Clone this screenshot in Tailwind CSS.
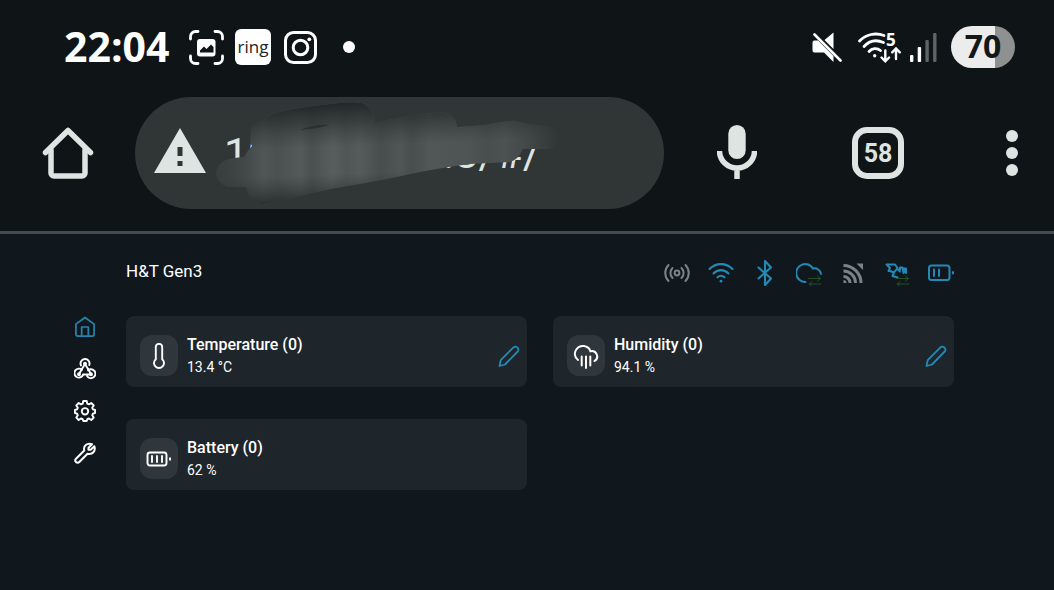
<!DOCTYPE html>
<html lang="en">
  <head>
    <meta charset="UTF-8" />
    <meta name="viewport" content="width=device-width, initial-scale=1.0" />
    <title>H&amp;T Gen3</title>
    <script src="https://cdn.jsdelivr.net/npm/@tailwindcss/browser@4"></script>
  </head>
  <body class="min-h-screen bg-[#10181e] font-['Roboto',sans-serif] text-white">
    <header class="bg-[#0f1516] border-b-3 border-[#454b4b]">
      <!-- Phone status bar -->
      <div class="flex items-center h-[94px] pl-16 pr-[39px]">
        <span class="w-[125px] pb-0.5 font-['Open_Sans',sans-serif] font-bold text-[41px] leading-none">22:04</span>
        <svg class="w-[35px] h-[35px]" viewBox="0 0 35 35" fill="none">
          <path d="M1.500 9V6.500a5 5 0 0 1 5-5H9M26 1.500h2.500a5 5 0 0 1 5 5V9M33.500 26v2.500a5 5 0 0 1-5 5H26M9 33.500H6.500a5 5 0 0 1-5-5V26" stroke="#fff" stroke-width="2.800" stroke-linecap="round" />
          <rect x="8" y="9" width="18.500" height="17.500" rx="3" fill="#fff" />
          <path d="M11 22.500v-2l4-4 2.500 2.500 4.500-4.500 2.500 2.500v5.500z" fill="#0f1516" />
        </svg>
        <span class="ml-[11px] flex items-center justify-center w-9 h-9 rounded-md bg-white text-[#222] font-['Open_Sans',sans-serif] font-medium text-[17px] leading-none pb-0.5">ring</span>
        <svg class="ml-[13px] w-[33px] h-[33px]" viewBox="0 0 33 33" fill="none" stroke="#fff" stroke-width="3">
          <rect x="1.500" y="1.500" width="30" height="30" rx="8" />
          <circle cx="16.500" cy="16.500" r="7.300" />
          <circle cx="25.300" cy="8.300" r="1.900" fill="#fff" stroke="none" />
        </svg>
        <span class="ml-[26px] w-3 h-3 rounded-full bg-white"></span>

        <svg class="ml-auto w-[30px] h-[30px]" viewBox="0 0 30 30" fill="#fff">
          <path d="M2 8.500H6L21.500 24V30L12 20.500H2.500A2 2 0 0 1 .500 18.500v-8a2 2 0 0 1 1.500-2zM12.500 8l9-7.500v16.500z" />
          <path d="M2.500 2.500L28.500 28.500" stroke="#fff" stroke-width="2.600" stroke-linecap="round" />
        </svg>
        <svg class="ml-4 w-[43px] h-[31px] overflow-visible" viewBox="0 0 43 31" fill="none" stroke="#fff" stroke-width="2.800" stroke-linecap="round">
          <path d="M1.500 9C8 2 18 .500 26 3.500M6 14.500C11.500 8.500 18.500 7.500 25.500 10.500M11 19.500C14 16 19 15.500 22.500 18.500" />
          <circle cx="16.700" cy="23.700" r="1.700" fill="#fff" stroke="none" />
          <path d="M27.300 18.500v10.500M23.500 25.500l3.800 3.800 3.800-3.800M38 27V17M34.200 20.300L38 16.500l3.800 3.800" stroke-width="2.400" />
          <text x="28" y="14" font-size="17" font-weight="700" font-family="Open Sans, sans-serif" fill="#fff" stroke="none">5</text>
        </svg>
        <svg class="ml-[9px] w-[27px] h-[29px]" viewBox="0 0 27 29" fill="#fff">
          <rect x="0" y="22" width="3.400" height="7" rx="1" />
          <rect x="7.700" y="14" width="3.400" height="15" rx="1" />
          <rect x="15.400" y="7" width="3.400" height="22" rx="1" fill="#5f6464" />
          <rect x="23.100" y="0" width="3.400" height="29" rx="1" fill="#5f6464" />
        </svg>
        <div class="ml-[14px] flex items-center justify-center w-16 h-[42px] pb-0.5 rounded-full bg-linear-to-r from-[#ececec] from-69% to-[#8f9191] to-69% text-[#131818] font-['Open_Sans',sans-serif] font-bold text-[32px] leading-none">70</div>
      </div>

      <!-- Browser toolbar -->
      <div class="flex items-center pt-[3px] pb-[22px] pl-[42px] pr-9 text-[#dee4e2]">
        <button aria-label="Home">
          <svg class="w-[52px] h-[52px]" viewBox="0 0 52 52" fill="none" stroke="currentColor" stroke-width="5.500" stroke-linecap="round" stroke-linejoin="round">
            <path d="M3.500 25.500L26 3.500l22.500 22" />
            <path d="M9 23v23a3 3 0 0 0 3 3h28a3 3 0 0 0 3-3V23" />
          </svg>
        </button>
        <div class="relative ml-[41px] flex flex-1 min-w-0 items-center h-28 pl-[19px] pr-10 rounded-full bg-[#303535]">
          <svg class="w-[52px] h-[45px] shrink-0 -mt-1.5" viewBox="0 0 52 45" fill="currentColor">
            <path fill-rule="evenodd" d="M26 0l26 45H0zM23.500 19v9h5v-9zM23.500 33v5h5v-5z" />
          </svg>
          <input type="text" aria-label="Address" value="19                .8/#/" class="ml-[18px] min-w-0 flex-1 bg-transparent text-[43px] leading-none outline-none" />
          <!-- Smudge over the private part of the address -->
          <svg class="absolute left-20 top-1 w-[350px] h-[106px] pointer-events-none" viewBox="215 101 350 106">
            <defs>
              <linearGradient id="streaks" gradientUnits="userSpaceOnUse" x1="215" y1="0" x2="560" y2="0">
                <stop offset="0" stop-color="#373c3c" />
                <stop offset=".08" stop-color="#414646" />
                <stop offset=".14" stop-color="#505555" />
                <stop offset=".18" stop-color="#4b5151" />
                <stop offset=".25" stop-color="#545a5a" />
                <stop offset=".28" stop-color="#4a4f4f" />
                <stop offset=".34" stop-color="#585e5e" />
                <stop offset=".38" stop-color="#505656" />
                <stop offset=".42" stop-color="#555b5b" />
                <stop offset=".48" stop-color="#484d4d" />
                <stop offset=".54" stop-color="#505555" />
                <stop offset=".57" stop-color="#484d4d" />
                <stop offset=".62" stop-color="#515757" />
                <stop offset=".74" stop-color="#4e5454" />
                <stop offset=".79" stop-color="#484e4e" />
                <stop offset=".84" stop-color="#4c5151" />
                <stop offset=".9" stop-color="#434848" />
                <stop offset="1" stop-color="#303535" />
              </linearGradient>
              <linearGradient id="shade" gradientUnits="userSpaceOnUse" x1="380" y1="102" x2="384" y2="205">
                <stop offset="0" stop-color="#1d2222" stop-opacity=".9" />
                <stop offset=".18" stop-color="#262b2b" stop-opacity=".6" />
                <stop offset=".42" stop-color="#303535" stop-opacity="0" />
                <stop offset=".68" stop-color="#303535" stop-opacity="0" />
                <stop offset=".95" stop-color="#232828" stop-opacity=".85" />
              </linearGradient>
              <path id="smudge" d="M251 128Q254 123 262 122Q268 115 279 112Q300 107 330 104Q352 101 362 103Q374 108 375 123Q398 117 440 112Q456 114 457 127L485 125Q510 120 516 121Q530 125 548 126Q560 130 559 140Q556 148 550 149L523 149Q518 160 510 162L470 164Q440 168 420 172Q385 180 330 189Q290 198 262 205Q250 202 246 187Q234 187 228 187Q215 182 216 172Q218 163 226 160Q232 158 244 157L247 152L252 146L250 142Q251 136 251 128z" />
            </defs>
            <use href="#smudge" fill="url(#streaks)" />
            <use href="#smudge" fill="url(#shade)" />
            <path d="M300 130q14-6 29-5q-12 4-29 5z" fill="#2b3030" />
          </svg>
        </div>
        <button class="ml-[53px]" aria-label="Voice search">
          <svg class="w-10 h-[55px] -mt-0.5" viewBox="0 0 40 55" fill="none">
            <rect x="11.300" y="0" width="17.400" height="34" rx="8.700" fill="currentColor" />
            <path d="M2.500 26a17.500 17 0 0 0 35 0M20 42v12" stroke="currentColor" stroke-width="5.500" />
          </svg>
        </button>
        <button class="ml-[95px] flex items-center justify-center w-[52px] h-[52px] border-6 border-[#dee4e2] rounded-[15px] font-bold text-[25px] leading-none" aria-label="58 open tabs">58</button>
        <button class="ml-[102px] flex flex-col gap-[5px]" aria-label="Menu">
          <span class="w-3 h-3 rounded-full bg-[#dee4e2]"></span>
          <span class="w-3 h-3 rounded-full bg-[#dee4e2]"></span>
          <span class="w-3 h-3 rounded-full bg-[#dee4e2]"></span>
        </button>
      </div>
    </header>

    <main class="pl-[74px] pr-[100px] pt-6">
      <div class="flex items-center justify-between h-7 pl-[52px]">
        <h1 class="text-[17px]">H&amp;T Gen3</h1>
        <!-- Connection icons -->
        <div class="flex items-center gap-[18px] pt-0.5 text-[#2389b5]">
          <svg class="w-[26px] h-[26px] text-[#7b8288]" viewBox="0 0 26 26" fill="none" stroke="currentColor" stroke-width="2" stroke-linecap="round">
            <circle cx="13" cy="13" r="2.400" />
            <path d="M8.500 8a7 7 0 0 0 0 10M17.500 8a7 7 0 0 1 0 10M4.500 5a11.500 11.500 0 0 0 0 16M21.500 5a11.500 11.500 0 0 1 0 16" />
          </svg>
          <svg class="w-[26px] h-[26px]" viewBox="0 0 26 26" fill="none" stroke="currentColor" stroke-width="2.100" stroke-linecap="round">
            <path d="M1.500 9C8 2.500 18 2.500 24.500 9M5.500 13.500C10 9 16 9 20.500 13.500M9.500 17.300C11.500 15.300 14.500 15.300 16.500 17.300" />
            <circle cx="13" cy="21.200" r="1.400" fill="currentColor" stroke="none" />
          </svg>
          <svg class="w-[26px] h-[26px]" viewBox="0 0 26 26" fill="none" stroke="currentColor" stroke-width="2.100" stroke-linejoin="round" stroke-linecap="round">
            <path d="M6.500 7.500L19 18.500 13 25V1l6 6.500L6.500 18.500" />
          </svg>
          <svg class="w-[26px] h-[26px]" viewBox="0 0 26 26" fill="none" stroke="currentColor" stroke-width="2" stroke-linecap="round">
            <path d="M9.500 22A9 9 0 1 1 17 8.500A6.500 6.500 0 0 1 25 14" />
            <path d="M12.500 18.500h12l-3-2.500M24.500 18.500l-3 2.500M25 24H13l3-2.500M13 24l3 2.500" stroke="#284f28" stroke-width="1" />
          </svg>
          <svg class="w-[26px] h-[26px] text-[#7b8288]" viewBox="0 0 26 26" fill="none" stroke="currentColor" stroke-width="3">
            <path d="M3.500 16.500a6.500 6.500 0 0 1 6.500 6.500M3.500 11a12 12 0 0 1 12 12M3.500 5.500a17.500 17.500 0 0 1 17.500 17.500" />
            <path d="M3.500 23v-3a3 3 0 0 1 3 3zM16.500 3.500h6.500v6.500z" fill="currentColor" stroke="none" />
          </svg>
          <svg class="w-[26px] h-[26px]" viewBox="0 0 26 26" fill="none" stroke="currentColor" stroke-width="2" stroke-linejoin="round" stroke-linecap="round">
            <path d="M2.500 4.500H11l2.500 3.500-3.500 4.500-4-1.500M2.500 4.500l3.500 3.500M6 8l-1.500 3M10 12.500l-1.500 3.500 5 1.500M13 8.500l3 3M16 9.500v-2h2.500l1 5.500M20 12.500V8.500h2v4.500" />
            <path d="M12.500 18.500h12l-3-2.500M24.500 18.500l-3 2.500M25 24H13l3-2.500M13 24l3 2.500" stroke="#284f28" stroke-width="1" />
          </svg>
          <svg class="w-[26px] h-[26px]" viewBox="0 0 26 26" fill="none" stroke="currentColor" stroke-width="2" stroke-linecap="round">
            <rect x="1" y="5.500" width="20.500" height="14.500" rx="2.500" />
            <path d="M6 9.500v6.500M11 9.500v6.500M25 12v1.500" />
          </svg>
        </div>
      </div>

      <div class="flex gap-[30px] mt-[30px]">
        <nav class="flex flex-col gap-5 w-[22px] shrink-0">
          <a href="#/" aria-label="Home" class="text-[#2585ae]">
            <svg class="w-[22px] h-[22px]" viewBox="-.5 0 23 23" fill="none" stroke="currentColor" stroke-width="1.800" stroke-linejoin="round">
              <path d="M1.500 8.500L11 1.500l9.500 7V19a2 2 0 0 1-2 2h-15a2 2 0 0 1-2-2z" />
              <path d="M7.500 21v-9.500h7V21" />
            </svg>
          </a>
          <a href="#/actions" aria-label="Actions">
            <svg class="w-[22px] h-[22px]" viewBox="0 0 22 22" fill="none" stroke="currentColor" stroke-width="1.900" stroke-linecap="round">
              <path d="M7 7.500a4.500 4.500 0 1 1 8.300-.500M11 6l-6 10M11 6l6 10M8 11.800a4.500 4.500 0 1 0 1 5.200M9 16.500h8.500M14 12.300a4.500 4.500 0 1 1-.800 6" />
              <circle cx="11" cy="5.800" r="1" fill="currentColor" />
              <circle cx="5" cy="16.300" r="1" fill="currentColor" />
              <circle cx="17" cy="16.300" r="1" fill="currentColor" />
            </svg>
          </a>
          <a href="#/settings" aria-label="Settings">
            <svg class="w-[22px] h-[22px]" viewBox="0 0 22 22" fill="none" stroke="currentColor" stroke-width="1.900" stroke-linejoin="round">
              <path d="M9.300 1h3.400l.6 2.700 1.700.7L17.300 3l2.400 2.400-1.500 2.300.7 1.700 2.200.6v3l-2.200.6-.7 1.700 1.500 2.300-2.400 2.400-2.300-1.500-1.700.7-.6 1.800H9.300l-.6-1.800-1.700-.7L4.700 20l-2.400-2.400 1.500-2.300-.7-1.700L.900 13v-3l2.200-.6.7-1.700-1.500-2.300L4.700 3 7 4.400l1.700-.7z" />
              <circle cx="11" cy="11.300" r="3.200" />
            </svg>
          </a>
          <a href="#/tools" aria-label="Tools">
            <svg class="w-[22px] h-[22px]" viewBox="0 0 22 22" fill="none" stroke="currentColor" stroke-width="2" stroke-linejoin="round">
              <path d="M18 2.200L14.500 5.700v2h2.200L20.300 4.200C22 9 18.500 13 13.500 11.700L5.300 20a2.300 2.300 0 0 1-3.300-3.300L10.300 8.500C9 4 13 .500 18 2.200z" />
            </svg>
          </a>
        </nav>

        <div class="grid grid-cols-2 gap-x-[26px] gap-y-8 flex-1">
          <section class="flex items-center pt-[17px] pb-[9px] pl-[14px] pr-[7px] rounded-lg bg-[#1e252b]">
            <div class="flex items-center justify-center w-[38px] h-[41px] rounded-xl bg-[#30373c]">
              <svg class="w-[26px] h-[26px]" viewBox="0 0 26 26" fill="none" stroke="currentColor" stroke-width="1.900">
                <path d="M9.800 4a3.200 3.200 0 0 1 6.400 0v12.200a5 5 0 1 1-6.400 0z" />
              </svg>
            </div>
            <div class="ml-[9px]">
              <h2 class="font-medium text-base leading-[23px]">Temperature (0)</h2>
              <p class="text-sm leading-[22px]">13.4 °C</p>
            </div>
            <button class="ml-auto text-[#2389b5]" aria-label="Edit temperature">
              <svg class="w-[22px] h-[22px]" viewBox="0 0 22 22" fill="none" stroke="currentColor" stroke-width="1.800" stroke-linejoin="round">
                <path d="M1.500 21l1.200-5.800L15.500 2.300a2.600 2.600 0 0 1 3.700 0l.5.500a2.600 2.600 0 0 1 0 3.700L7 19.500z" />
              </svg>
            </button>
          </section>

          <section class="flex items-center pt-[17px] pb-[9px] pl-[14px] pr-[7px] rounded-lg bg-[#1e252b]">
            <div class="flex items-center justify-center w-[38px] h-[41px] rounded-xl bg-[#30373c]">
              <svg class="w-[26px] h-[26px]" viewBox="0 0 26 26" fill="none" stroke="currentColor" stroke-width="2" stroke-linecap="round">
                <path d="M5 17A7.500 7.500 0 0 1 3.300 6.500A8 8 0 0 1 17.500 8.300A5.300 5.300 0 0 1 21.500 18" />
                <path d="M8.700 13.500v9M13 13.500v11.500M17.300 13.500v9" />
              </svg>
            </div>
            <div class="ml-[9px]">
              <h2 class="font-medium text-base leading-[23px]">Humidity (0)</h2>
              <p class="text-sm leading-[22px]">94.1 %</p>
            </div>
            <button class="ml-auto text-[#2389b5]" aria-label="Edit humidity">
              <svg class="w-[22px] h-[22px]" viewBox="0 0 22 22" fill="none" stroke="currentColor" stroke-width="1.800" stroke-linejoin="round">
                <path d="M1.500 21l1.200-5.800L15.500 2.300a2.600 2.600 0 0 1 3.700 0l.5.500a2.600 2.600 0 0 1 0 3.700L7 19.500z" />
              </svg>
            </button>
          </section>

          <section class="flex items-center pt-[17px] pb-[9px] pl-[14px] pr-[7px] rounded-lg bg-[#1e252b]">
            <div class="flex items-center justify-center w-[38px] h-[41px] rounded-xl bg-[#30373c]">
              <svg class="w-[26px] h-[26px]" viewBox="0 0 26 26" fill="none" stroke="currentColor" stroke-width="1.900" stroke-linecap="round">
                <rect x="1.500" y="6.500" width="19" height="13" rx="2.500" />
                <path d="M6 10v6M11 10v6M16 10v6M24 12.300v1.400" />
              </svg>
            </div>
            <div class="ml-[9px]">
              <h2 class="font-medium text-base leading-[23px]">Battery (0)</h2>
              <p class="text-sm leading-[22px]">62 %</p>
            </div>
          </section>
        </div>
      </div>
    </main>
  </body>
</html>
